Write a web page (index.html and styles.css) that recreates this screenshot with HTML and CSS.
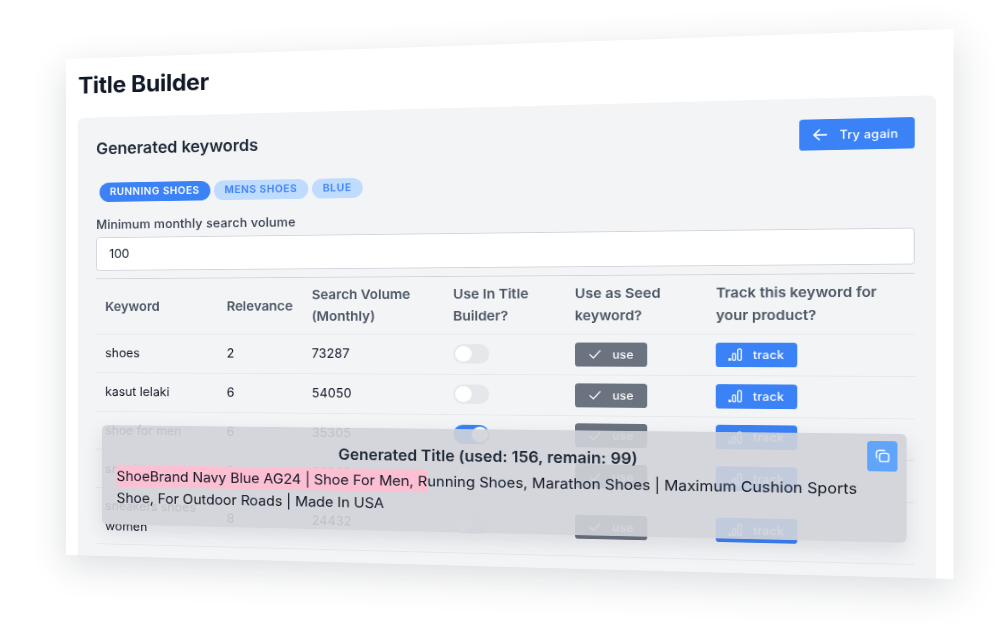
FILE: index.html
```html
<!doctype html>
<html>
<head>
    <title>Title Builder</title>
    <link rel="stylesheet" href="styles.css">
</head>

<body>
    <div class="sheet">
        <h1 class="page-title">Title Builder</h1>

        <div class="panel">
            <div class="panel-head">
                <h2 class="panel-title">Generated keywords</h2>
                <button class="btn btn-blue btn-back">
                    <svg class="icon-back" viewBox="0 0 18 18" fill="none" stroke="currentColor" stroke-width="1.8" stroke-linecap="round" stroke-linejoin="round"><path d="M8 3 2 9l6 6M2 9h14"/></svg>
                    Try again
                </button>
            </div>

            <div class="chips">
                <span class="chip chip-on">Running shoes</span>
                <span class="chip">Mens shoes</span>
                <span class="chip">Blue</span>
            </div>

            <label class="field-label" for="volume">Minimum monthly search volume</label>
            <input class="field" id="volume" type="text" value="100">

            <table class="keywords">
                <colgroup>
                    <col class="col-keyword"><col class="col-relevance"><col class="col-volume">
                    <col class="col-use"><col class="col-seed"><col class="col-track">
                </colgroup>
                <thead>
                    <tr>
                        <th>Keyword</th>
                        <th>Relevance</th>
                        <th>Search Volume (Monthly)</th>
                        <th>Use In Title Builder?</th>
                        <th>Use as Seed keyword?</th>
                        <th>Track this keyword for your product?</th>
                    </tr>
                </thead>
                <tbody>
                    <tr>
                        <td>shoes</td><td>2</td><td>73287</td>
                        <td><span class="toggle"></span></td>
                        <td><button class="btn btn-gray"><svg class="icon" viewBox="0 0 16 16" fill="none" stroke="currentColor" stroke-width="1.5" stroke-linecap="round" stroke-linejoin="round"><path d="m2 8.500 4 4 8-9"/></svg>use</button></td>
                        <td><button class="btn btn-blue btn-track"><svg class="icon" viewBox="0.5 0.5 15 15" fill="none" stroke="currentColor" stroke-width="1.3"><circle cx="1.800" cy="13.600" r="1.100" fill="currentColor"/><rect x="5" y="6.500" width="3.200" height="8" rx="1.300"/><rect x="10.500" y="1.500" width="3.800" height="13" rx="1.500"/></svg>track</button></td>
                    </tr>
                    <tr>
                        <td>kasut lelaki</td><td>6</td><td>54050</td>
                        <td><span class="toggle"></span></td>
                        <td><button class="btn btn-gray"><svg class="icon" viewBox="0 0 16 16" fill="none" stroke="currentColor" stroke-width="1.5" stroke-linecap="round" stroke-linejoin="round"><path d="m2 8.500 4 4 8-9"/></svg>use</button></td>
                        <td><button class="btn btn-blue btn-track"><svg class="icon" viewBox="0.5 0.5 15 15" fill="none" stroke="currentColor" stroke-width="1.3"><circle cx="1.800" cy="13.600" r="1.100" fill="currentColor"/><rect x="5" y="6.500" width="3.200" height="8" rx="1.300"/><rect x="10.500" y="1.500" width="3.800" height="13" rx="1.500"/></svg>track</button></td>
                    </tr>
                    <tr>
                        <td>shoe for men</td><td>6</td><td>35305</td>
                        <td><span class="toggle toggle-on"></span></td>
                        <td><button class="btn btn-gray"><svg class="icon" viewBox="0 0 16 16" fill="none" stroke="currentColor" stroke-width="1.5" stroke-linecap="round" stroke-linejoin="round"><path d="m2 8.500 4 4 8-9"/></svg>use</button></td>
                        <td><button class="btn btn-blue btn-track"><svg class="icon" viewBox="0.5 0.5 15 15" fill="none" stroke="currentColor" stroke-width="1.3"><circle cx="1.800" cy="13.600" r="1.100" fill="currentColor"/><rect x="5" y="6.500" width="3.200" height="8" rx="1.300"/><rect x="10.500" y="1.500" width="3.800" height="13" rx="1.500"/></svg>track</button></td>
                    </tr>
                    <tr>
                        <td>sneakers</td><td>8</td><td>26929</td>
                        <td><span class="toggle"></span></td>
                        <td><button class="btn btn-gray"><svg class="icon" viewBox="0 0 16 16" fill="none" stroke="currentColor" stroke-width="1.5" stroke-linecap="round" stroke-linejoin="round"><path d="m2 8.500 4 4 8-9"/></svg>use</button></td>
                        <td><button class="btn btn-blue btn-track"><svg class="icon" viewBox="0.5 0.5 15 15" fill="none" stroke="currentColor" stroke-width="1.3"><circle cx="1.800" cy="13.600" r="1.100" fill="currentColor"/><rect x="5" y="6.500" width="3.200" height="8" rx="1.300"/><rect x="10.500" y="1.500" width="3.800" height="13" rx="1.500"/></svg>track</button></td>
                    </tr>
                    <tr class="row-tall">
                        <td>sneakers shoes women</td><td>8</td><td>24432</td>
                        <td><span class="toggle"></span></td>
                        <td><button class="btn btn-gray"><svg class="icon" viewBox="0 0 16 16" fill="none" stroke="currentColor" stroke-width="1.5" stroke-linecap="round" stroke-linejoin="round"><path d="m2 8.500 4 4 8-9"/></svg>use</button></td>
                        <td><button class="btn btn-blue btn-track"><svg class="icon" viewBox="0.5 0.5 15 15" fill="none" stroke="currentColor" stroke-width="1.3"><circle cx="1.800" cy="13.600" r="1.100" fill="currentColor"/><rect x="5" y="6.500" width="3.200" height="8" rx="1.300"/><rect x="10.500" y="1.500" width="3.800" height="13" rx="1.500"/></svg>track</button></td>
                    </tr>
                </tbody>
            </table>
        </div>

        <div class="result">
            <button class="copy-btn">
                <svg viewBox="0 0 18 18" fill="none" stroke="currentColor" stroke-width="1.5" stroke-linejoin="round"><rect x="6" y="6" width="10" height="10" rx="2.500"/><path d="M12 3.600A2.500 2.500 0 0 0 10 2.500H5A2.500 2.500 0 0 0 2.500 5v5A2.500 2.500 0 0 0 3.600 12"/></svg>
            </button>
            <p class="result-title">Generated Title (used: 156, remain: 99)</p>
            <p class="result-text"><span class="used">ShoeBrand Navy Blue AG24 | Shoe For Men,</span> Running Shoes, Marathon Shoes | Maximum Cushion Sports Shoe, For Outdoor Roads | Made In USA</p>
        </div>
    </div>
</body>
</html>
```

FILE: styles.css
```css
html, body {
    margin: 0;
    height: 638px;
    overflow: hidden;
    background-color: #fff;
}

/* the whole page is tilted, corners fall at 66,59 954,29 954,579 66,555 */
.sheet {
    position: relative;
    width: 959.4px;
    height: 594px;
    padding: 17px 17px 0 14.4px;
    box-sizing: border-box;
    overflow: hidden;
    background-color: #fff;
    box-shadow: 0 12px 40px rgba(31, 41, 55, 0.16);
    font-family: Inter, "Noto Sans", sans-serif;
    color: #1f2937;
    filter: blur(0.45px);
    transform-origin: 0 0;
    transform: matrix3d(0.82794, -0.034237, 0, -0.00010233, 0, 0.83502, 0, 0, 0, 0, 1, 0, 66, 59, 0, 1);
}

.page-title {
    margin: 0 0 21.15px 0;
    font-size: 27px;
    line-height: 32.4px;
    font-weight: 700;
    letter-spacing: -0.36px;
    color: #111827;
}

.panel {
    height: 558px;
    padding: 23.4px 21.6px 0 21.6px;
    box-sizing: border-box;
    background-color: #f3f4f6;
    border-radius: 7px;
}

.panel-head {
    display: flex;
    justify-content: space-between;
    align-items: flex-start;
    height: 34.2px;
    margin-bottom: 20.7px;
}

.panel-title {
    margin: 1.8px 0 0 0;
    font-size: 18.9px;
    line-height: 25.2px;
    font-weight: 600;
    color: #1f2937;
}

.btn {
    display: inline-flex;
    align-items: center;
    gap: 10.8px;
    height: 27px;
    padding: 0 14.4px;
    border: none;
    border-radius: 3.6px;
    color: #fff;
    font-family: inherit;
    font-size: 12.6px;
    font-weight: 500;
    letter-spacing: 0.02em;
    vertical-align: middle;
}

.btn-blue { background-color: #3b82f6; }
.btn-gray { background-color: #6b7280; }
.btn-track { padding: 0 13.5px 0 12.6px; }

.btn-back {
    height: 34.2px;
    gap: 11.8px;
    padding: 0 16px 0 12.6px;
}

.icon { width: 14.4px; height: 14.4px; }
.icon-back { width: 16.2px; height: 16.2px; }

.chips {
    display: flex;
    gap: 3.6px;
    margin: 0 0 15.75px 3.6px;
}

.chip {
    height: 23.4px;
    padding: 0 12.6px;
    border-radius: 11.7px;
    background-color: #bfdbfe;
    color: #3b82f6;
    font-size: 11.7px;
    line-height: 23.4px;
    font-weight: 600;
    letter-spacing: 0.05em;
    text-transform: uppercase;
}

.chip-on {
    background-color: #3b82f6;
    color: #fff;
}

.field-label {
    display: block;
    margin-bottom: 4.5px;
    font-size: 14.4px;
    line-height: 21.6px;
    font-weight: 500;
    letter-spacing: 0.01em;
    color: #374151;
}

.field {
    display: block;
    width: 100%;
    height: 39.6px;
    padding: 0 14.4px;
    box-sizing: border-box;
    border: 1px solid #d1d5db;
    border-radius: 3.6px;
    background-color: #fff;
    color: #111827;
    font-family: inherit;
    font-size: 14.4px;
}

.keywords {
    width: 100%;
    margin-top: 9.45px;
    border-collapse: collapse;
    table-layout: fixed;
    border-top: 1px solid #d1d5db;
}

.col-keyword { width: 142px; }
.col-relevance { width: 96.9px; }
.col-volume { width: 157.2px; }
.col-use { width: 131px; }
.col-seed { width: 147.3px; }

.keywords th {
    height: 65.7px;
    padding: 0 10.8px;
    box-sizing: border-box;
    border-bottom: 1px solid #e5e7eb;
    color: #4b5563;
    font-size: 15.1px;
    line-height: 25.2px;
    font-weight: 600;
    text-align: left;
}

.keywords td {
    height: 45.9px;
    padding: 0 10.8px;
    box-sizing: border-box;
    border-bottom: 1px solid #e5e7eb;
    font-size: 14.4px;
    line-height: 21.6px;
    color: #111827;
}

.keywords .row-tall td {
    height: 66.6px;
    line-height: 24.3px;
}

.toggle {
    display: block;
    position: relative;
    width: 39.6px;
    height: 21.6px;
    border-radius: 10.8px;
    background-color: #e5e7eb;
}

.toggle:before {
    content: "";
    position: absolute;
    top: 1.8px;
    left: 1.8px;
    width: 18px;
    height: 18px;
    border-radius: 50%;
    background-color: #fff;
}

.toggle-on { background-color: #3b82f6; }
.toggle-on:before { left: 19.8px; }

.result {
    position: absolute;
    top: 438.3px;
    left: 43.2px;
    width: 869.4px;
    height: 117.9px;
    padding: 18px 17.1px;
    box-sizing: border-box;
    border-radius: 5.4px;
    background-color: rgba(209, 211, 216, 0.9);
    box-shadow: 0 9px 22px rgba(31, 41, 55, 0.12);
}

.result p { margin: 0; }

.result .result-title {
    margin-bottom: 3.6px;
    font-size: 17.3px;
    line-height: 25.2px;
    font-weight: 600;
    text-align: center;
    color: #1f2937;
}

.result-text {
    font-size: 16.2px;
    line-height: 26px;
    color: #111827;
}

.used {
    display: inline-block;
    padding-right: 15.3px;
    margin-right: -15.3px;
    background-color: #fcc0d2;
}

.copy-btn {
    position: absolute;
    top: 8.1px;
    right: 8.1px;
    width: 30.6px;
    height: 32.4px;
    padding: 0;
    border: none;
    border-radius: 3.6px;
    background-color: #60a5fa;
    color: #fff;
}

.copy-btn svg {
    display: block;
    width: 16.2px;
    height: 16.2px;
    margin: 0 auto;
}
```
